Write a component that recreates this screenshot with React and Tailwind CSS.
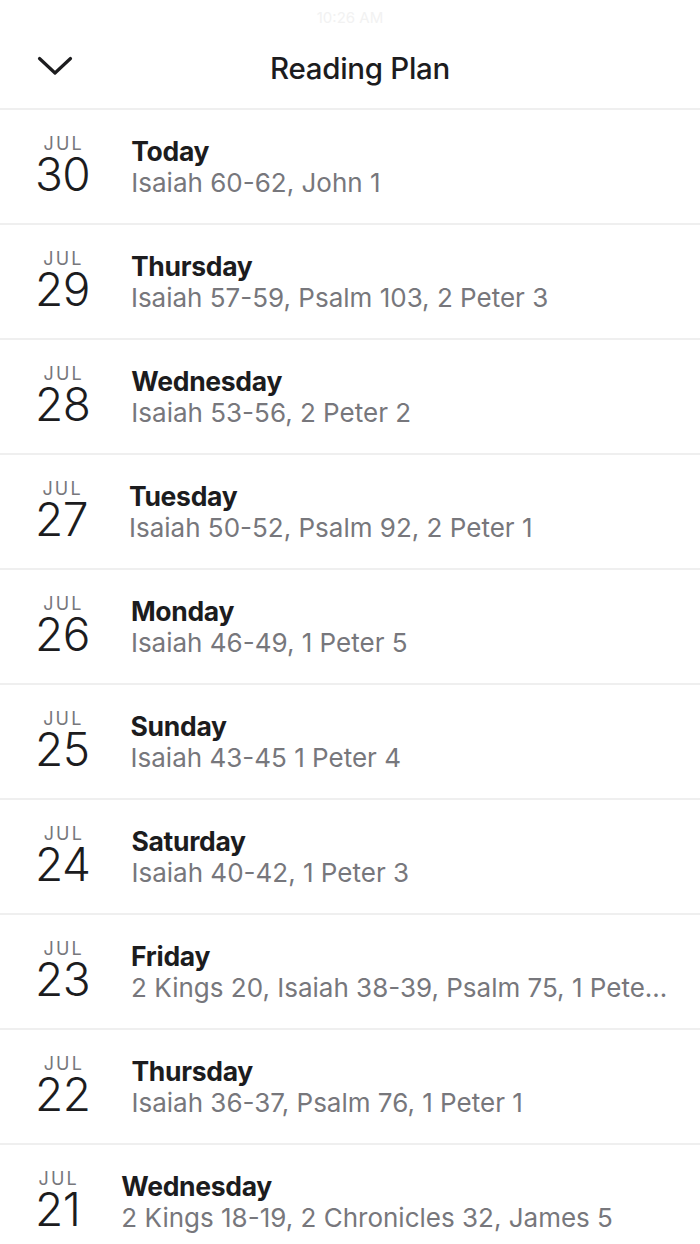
import React from 'react';

const plan = [
  { day: '30', title: 'Today', passages: 'Isaiah 60-62, John 1' },
  { day: '29', title: 'Thursday', passages: 'Isaiah 57-59, Psalm 103, 2 Peter 3' },
  { day: '28', title: 'Wednesday', passages: 'Isaiah 53-56, 2 Peter 2' },
  { day: '27', title: 'Tuesday', passages: 'Isaiah 50-52, Psalm 92, 2 Peter 1' },
  { day: '26', title: 'Monday', passages: 'Isaiah 46-49, 1 Peter 5' },
  { day: '25', title: 'Sunday', passages: 'Isaiah 43-45 1 Peter 4' },
  { day: '24', title: 'Saturday', passages: 'Isaiah 40-42, 1 Peter 3' },
  { day: '23', title: 'Friday', passages: '2 Kings 20, Isaiah 38-39, Psalm 75, 1 Peter 2' },
  { day: '22', title: 'Thursday', passages: 'Isaiah 36-37, Psalm 76, 1 Peter 1' },
  { day: '21', title: 'Wednesday', passages: '2 Kings 18-19, 2 Chronicles 32, James 5' },
];

function Chevron() {
  return (
    <svg width="36" height="20" viewBox="0 0 36 20" fill="none">
      <path d="M2.5 2.5 L18 17 L33.5 2.5" stroke="#1c1c1e" strokeWidth="3.2" strokeLinecap="round" strokeLinejoin="round" />
    </svg>
  );
}

export default function App() {
  return (
    <div className="w-[700px] h-[1244px] overflow-hidden bg-white font-['Inter','Liberation_Sans',sans-serif]">
      <div className="h-[110px] border-b-2 border-[#efefef] flex flex-col">
        <div className="h-[36px] flex items-center justify-center text-[15px] text-[#f2f2f2]">10:26 AM</div>
        <div className="relative flex-1 flex items-center justify-center pl-[20px] pb-[8px]">
          <div className="absolute left-[37px] top-[20px]"><Chevron /></div>
          <h1 className="text-[29.5px] font-medium text-[#1c1c1e] tracking-[-0.3px]">Reading Plan</h1>
        </div>
      </div>

      {plan.map((p, i) => (
        <div key={i} className="h-[115px] border-b-2 border-[#efefef] flex items-center pl-[35px] pr-[30px] gap-[41px]">
          <div className="flex flex-col items-center shrink-0">
            <span className="text-[18px] leading-[18px] tracking-[0.12em] pl-[0.12em] text-[#77777c]">JUL</span>
            <span className="text-[46px] leading-[46px] -mt-[2px] mb-[2px] font-light text-[#1c1c1e] tracking-[-0.5px]">{p.day}</span>
          </div>
          <div className="flex flex-col min-w-0">
            <span className="text-[26.5px] leading-[32px] font-bold text-[#1c1c1e] tracking-[-0.3px]">{p.title}</span>
            <span className="text-[26px] leading-[32px] text-[#77777c] truncate">{p.passages}</span>
          </div>
        </div>
      ))}
    </div>
  );
}
